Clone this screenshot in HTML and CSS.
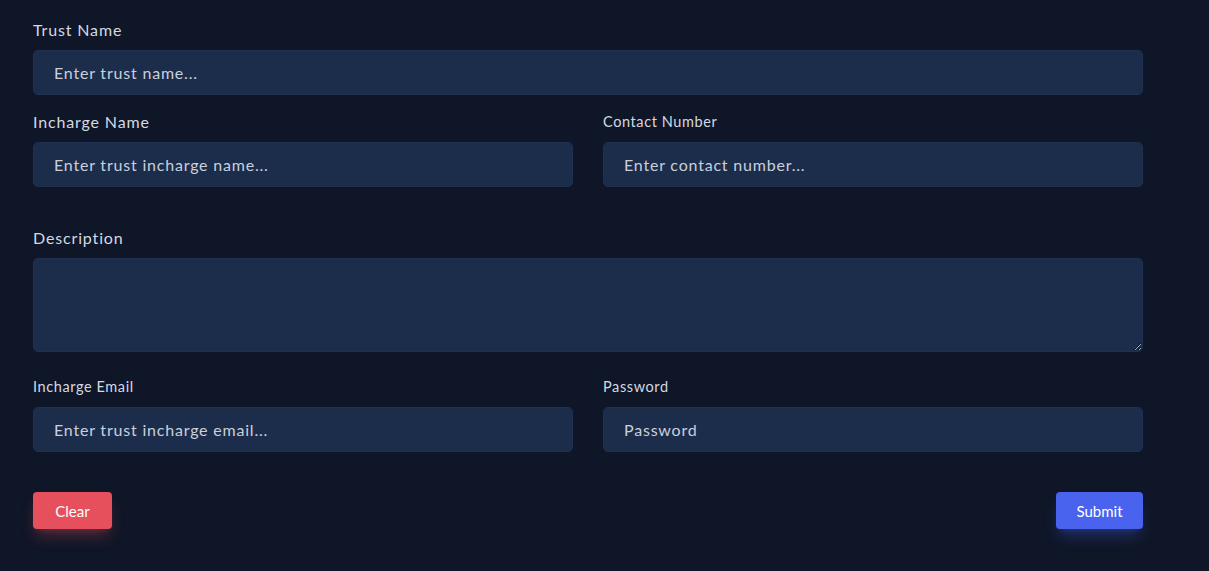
FILE: index.html
```html
<!DOCTYPE html>
<html lang="en">
<head>
<meta charset="utf-8">
<title>Trust Form</title>
<link rel="stylesheet" href="styles.css">
</head>
<body>
<form class="form">
  <div class="field row1">
    <label class="label">Trust Name</label>
    <input class="input" type="text" placeholder="Enter trust name...">
  </div>
  <div class="grid row2">
    <div class="field">
      <label class="label">Incharge Name</label>
      <input class="input" type="text" placeholder="Enter trust incharge name...">
    </div>
    <div class="field">
      <label class="label small">Contact Number</label>
      <input class="input" type="text" placeholder="Enter contact number...">
    </div>
  </div>
  <div class="field row3">
    <label class="label">Description</label>
    <textarea class="input textarea"></textarea>
  </div>
  <div class="grid row4">
    <div class="field">
      <label class="label small">Incharge Email</label>
      <input class="input" type="email" placeholder="Enter trust incharge email...">
    </div>
    <div class="field">
      <label class="label small">Password</label>
      <input class="input" type="password" placeholder="Password">
    </div>
  </div>
  <div class="actions">
    <button type="button" class="btn btn-clear">Clear</button>
    <button type="button" class="btn btn-submit">Submit</button>
  </div>
</form>
</body>
</html>
```
FILE: styles.css
```css
* { box-sizing: border-box; }
html, body {
  margin: 0;
  background: #0f1627;
  height: 100%;
}
body {
  font-family: Lato, "Noto Sans", sans-serif;
  color: #d4d9e2;
}
.form {
  width: 1110px;
  margin-left: 33px;
  padding-top: 19px;
  display: flex;
  flex-direction: column;
}
.field {
  display: flex;
  flex-direction: column;
  gap: 9px;
}
.label {
  font-size: 16px;
  line-height: 22px;
  letter-spacing: 0.85px;
  color: #d4d9e2;
}
.label.small {
  font-size: 14.5px;
  letter-spacing: 0.6px;
}
.input {
  width: 100%;
  height: 45px;
  background: #1c2d4b;
  border: 1px solid #1f3050;
  border-radius: 5px;
  padding: 0 20px;
  font-family: inherit;
  font-size: 16px;
  letter-spacing: 0.8px;
  color: #dfe4ec;
  outline: none;
}
.input::placeholder {
  color: #c9d0dc;
}
.textarea {
  height: 94px;
  padding-top: 12px;
  resize: vertical;
}
.grid {
  display: grid;
  grid-template-columns: 1fr 1fr;
  column-gap: 30px;
}
.row2 { margin-top: 16px; }
.row3 { margin-top: 40px; }
.row4 { margin-top: 24px; }
.actions {
  margin-top: 40px;
  display: flex;
  justify-content: space-between;
}
.btn {
  height: 37px;
  border: none;
  border-radius: 4px;
  font-family: inherit;
  font-size: 15px;
  color: #fff;
  padding: 0 20px;
}
.btn-clear {
  width: 79px;
  background: #e5505c;
  box-shadow: 0 10px 15px -3px rgba(229, 80, 92, 0.3), 0 4px 6px -4px rgba(229, 80, 92, 0.3);
}
.btn-submit {
  width: 87px;
  background: #4a63ee;
  box-shadow: 0 10px 15px -3px rgba(74, 99, 238, 0.3), 0 4px 6px -4px rgba(74, 99, 238, 0.3);
}
```
